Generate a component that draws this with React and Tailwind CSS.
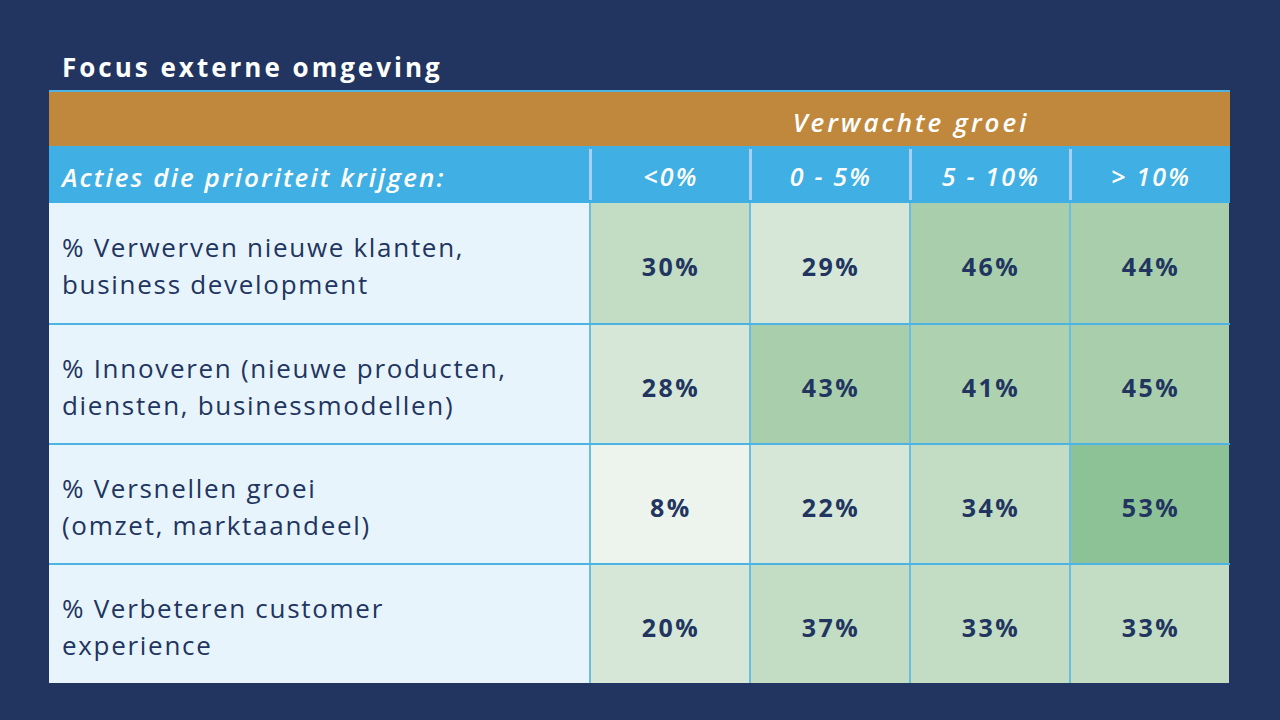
import React from "react";

const rows = [
  { label: ["% Verwerven nieuwe klanten,", "business development"], vals: [["30%", "bg-[#c3dcc4]"], ["29%", "bg-[#d7e7d7]"], ["46%", "bg-[#a8ceab]"], ["44%", "bg-[#a8ceab]"]] },
  { label: ["% Innoveren (nieuwe producten,", "diensten, businessmodellen)"], vals: [["28%", "bg-[#d7e7d7]"], ["43%", "bg-[#a8ceab]"], ["41%", "bg-[#aed1b0]"], ["45%", "bg-[#a8ceab]"]] },
  { label: ["% Versnellen groei", "(omzet, marktaandeel)"], vals: [["8%", "bg-[#ecf4ed]"], ["22%", "bg-[#d7e7d7]"], ["34%", "bg-[#c3dcc4]"], ["53%", "bg-[#8dc196]"]] },
  { label: ["% Verbeteren customer", "experience"], vals: [["20%", "bg-[#d7e7d7]"], ["37%", "bg-[#c3dcc4]"], ["33%", "bg-[#c3dcc4]"], ["33%", "bg-[#c3dcc4]"]] },
];

const heads = ["<0%", "0 - 5%", "5 - 10%", "> 10%"];

export default function App() {
  return (
    <div className="w-[1280px] h-[720px] bg-[#213560] pl-[49px] pt-[52px] font-['Open_Sans',sans-serif]">
      <div className="pl-[13px] h-[38px] text-white font-bold text-[26px] leading-[30px] tracking-[3px]">
        Focus externe omgeving
      </div>
      <div className="w-[1181px] border-t-2 border-[#4db3e3]">
        <div className="h-[54px] bg-[#c0883c] flex">
          <div className="w-[540px]" />
          <div className="flex-1 flex items-center justify-center pl-[3px] text-white italic font-semibold text-[26px] tracking-[3px] pt-[6px]">
            Verwachte groei
          </div>
        </div>
        <div className="h-[57px] bg-[#40b0e4] flex">
          <div className="w-[540px] flex items-center pl-[13px] pt-[5px] text-white italic font-semibold text-[26px] tracking-[2.1px]">
            Acties die prioriteit krijgen:
          </div>
          {heads.map((h, i) => (
            <div key={i} className="w-[160px] flex items-center py-[3px]">
              <div className="w-[3px] h-full bg-[#a3d3f1]" />
              <div className="flex-1 text-center text-white italic font-semibold text-[25px] tracking-[2.2px] pt-[5px] pl-[1px]">{h}</div>
            </div>
          ))}
        </div>
        {rows.map((r, ri) => (
          <div key={ri} className={`flex h-[120px] ${ri > 0 ? "border-t-2 border-[#4db3e3]" : ""}`}>
            <div className="w-[540px] bg-[#e8f4fc] flex flex-col justify-center pl-[13px] pt-[5px] text-[#213560] text-[26px] leading-[37px] tracking-[1.7px]">
              <div>{r.label[0]}</div>
              <div>{r.label[1]}</div>
            </div>
            {r.vals.map(([v, c], vi) => (
              <div key={vi} className={`w-[160px] ${c} border-l-2 border-[#6cbde2] flex items-center justify-center pt-[7px] pl-[2px] text-[#213560] font-bold text-[25px] tracking-[2.5px]`}>
                {v}
              </div>
            ))}
          </div>
        ))}
      </div>
    </div>
  );
}
